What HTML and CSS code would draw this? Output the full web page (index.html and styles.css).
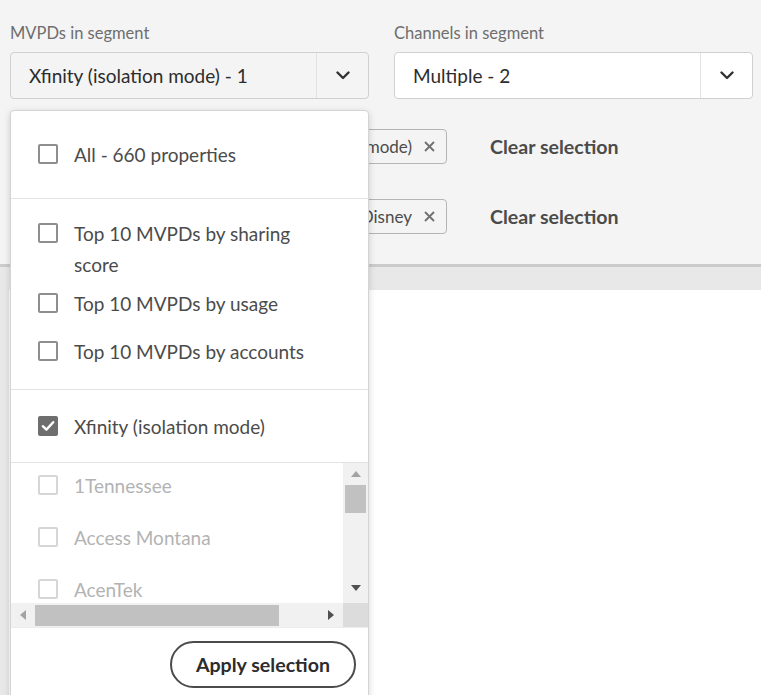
FILE: index.html
```html
<!DOCTYPE html>
<html lang="en">
<head>
<meta charset="utf-8">
<title>Segment filters</title>
<link rel="stylesheet" href="styles.css">
</head>
<body>
<div class="page">
  <header class="filters">
    <div class="fields">
      <div class="field">
        <div class="label">MVPDs in segment</div>
        <div class="select select-open">
          <span class="select-value">Xfinity (isolation mode) - 1</span>
          <span class="select-btn"><svg width="14" height="9" viewBox="0 0 14 9"><path d="M1.5 1.5 L7 7 L12.5 1.5" fill="none" stroke="#323232" stroke-width="2.4" stroke-linecap="round" stroke-linejoin="round"/></svg></span>
        </div>
      </div>
      <div class="field">
        <div class="label">Channels in segment</div>
        <div class="select">
          <span class="select-value">Multiple - 2</span>
          <span class="select-btn"><svg width="14" height="9" viewBox="0 0 14 9"><path d="M1.5 1.5 L7 7 L12.5 1.5" fill="none" stroke="#323232" stroke-width="2.4" stroke-linecap="round" stroke-linejoin="round"/></svg></span>
        </div>
      </div>
    </div>
    <div class="tag-row">
      <div class="tags">
        <span class="chip">Xfinity (isolation mode)<svg class="chip-x" width="11" height="11" viewBox="0 0 11 11"><path d="M1 1 L10 10 M10 1 L1 10" stroke="#707070" stroke-width="1.8"/></svg></span>
      </div>
      <span class="clear">Clear selection</span>
    </div>
    <div class="tag-row second">
      <div class="tags">
        <span class="chip">ESPN, Disney<svg class="chip-x" width="11" height="11" viewBox="0 0 11 11"><path d="M1 1 L10 10 M10 1 L1 10" stroke="#707070" stroke-width="1.8"/></svg></span>
      </div>
      <span class="clear">Clear selection</span>
    </div>
  </header>
  <div class="band"></div>
  <main class="content"></main>

  <div class="dropdown">
    <div class="section section-all">
      <label class="opt"><span class="box"></span><span class="opt-text">All - 660 properties</span></label>
    </div>
    <div class="section section-top">
      <label class="opt"><span class="box"></span><span class="opt-text">Top 10 MVPDs by sharing score</span></label>
      <label class="opt opt-usage"><span class="box"></span><span class="opt-text">Top 10 MVPDs by usage</span></label>
      <label class="opt opt-accounts"><span class="box"></span><span class="opt-text">Top 10 MVPDs by accounts</span></label>
    </div>
    <div class="section section-selected">
      <label class="opt"><span class="box checked"><svg width="14" height="12" viewBox="0 0 14 12"><path d="M1.8 6.2 L5.4 9.6 L12.2 2.2" fill="none" stroke="#fff" stroke-width="2.4" stroke-linecap="round" stroke-linejoin="round"/></svg></span><span class="opt-text">Xfinity (isolation mode)</span></label>
    </div>
    <div class="scroller">
      <div class="list">
        <label class="opt disabled"><span class="box"></span><span class="opt-text">1Tennessee</span></label>
        <label class="opt disabled"><span class="box"></span><span class="opt-text">Access Montana</span></label>
        <label class="opt disabled"><span class="box"></span><span class="opt-text">AcenTek</span></label>
      </div>
      <div class="vbar">
        <span class="arrow up dim"></span>
        <span class="vthumb"></span>
        <span class="vtrack"></span>
        <span class="arrow down"></span>
      </div>
      <div class="hbar">
        <span class="arrow left dim"></span>
        <span class="hthumb"></span>
        <span class="htrack"></span>
        <span class="arrow right"></span>
      </div>
      <div class="corner"></div>
    </div>
    <div class="actions">
      <button class="apply">Apply selection</button>
    </div>
  </div>
</div>
</body>
</html>
```

FILE: styles.css
```css
* { box-sizing: border-box; }

body {
  margin: 0;
  font-family: Lato, "Open Sans", sans-serif;
  background: #e8e8e8;
  color: #2c2c2c;
}

.page {
  position: relative;
  height: 695px;
  overflow: hidden;
}

.filters {
  background: #f4f4f4;
  padding: 23px 8px 30px 10px;
  border-bottom: 3px solid #cbcbcb;
}

.fields {
  display: flex;
  gap: 25px;
}

.field {
  width: 359px;
}

.label {
  font-size: 16.5px;
  line-height: 20px;
  color: #6e6e6e;
  margin-bottom: 9px;
}

.select {
  height: 47px;
  display: flex;
  align-items: stretch;
  border: 1px solid #d0d0d0;
  border-radius: 4px;
  background: #fff;
}

.select-open {
  background: #f4f4f4;
}

.select-value {
  flex: 1;
  display: flex;
  align-items: center;
  padding-left: 18px;
  font-size: 19px;
  color: #2c2c2c;
}

.select-btn {
  width: 52px;
  border-left: 1px solid #e2e2e2;
  display: flex;
  align-items: center;
  justify-content: center;
}

.tag-row {
  display: flex;
  align-items: center;
  margin-top: 30px;
  height: 35px;
}

.tag-row.second {
  margin-top: 35px;
}

.tags {
  width: 437px;
  display: flex;
  justify-content: flex-end;
  overflow: hidden;
  height: 35px;
}

.chip {
  height: 35px;
  display: flex;
  align-items: center;
  gap: 12px;
  padding: 0 11px 0 12px;
  border: 1px solid #b5b5b5;
  border-radius: 4px;
  font-size: 17px;
  color: #4b4b4b;
  white-space: nowrap;
}

.clear {
  margin-left: 43px;
  font-size: 19.6px;
  font-weight: 700;
  color: #4b4b4b;
}

.band {
  height: 23px;
  background: #e8e8e8;
}

.content {
  margin-left: 9px;
  height: 420px;
  background: #fff;
}

/* dropdown menu overlaying the page */
.dropdown {
  position: absolute;
  left: 10px;
  top: 110px;
  width: 359px;
  bottom: -10px;
  background: #fff;
  border: 1px solid #d4d4d4;
  border-radius: 4px 4px 0 0;
  box-shadow: 0 2px 7px rgba(0, 0, 0, 0.16);
}

.section {
  border-bottom: 1px solid #e3e3e3;
  padding-left: 27px;
}

.section-all {
  height: 88px;
  display: flex;
  align-items: center;
}

.section-top {
  padding-top: 19px;
  padding-bottom: 22px;
}

.section-selected {
  height: 73px;
  display: flex;
  align-items: center;
}

.opt {
  display: flex;
  align-items: flex-start;
  font-size: 19px;
  line-height: 31px;
  color: #4b4b4b;
}

.opt-text {
  max-width: 256px;
}

.opt-usage {
  margin-top: 8px;
}

.opt-accounts {
  margin-top: 17px;
}

.box {
  flex: none;
  width: 20px;
  height: 20px;
  margin: 5px 16px 0 0;
  border: 2px solid #8e8e8e;
  border-radius: 2px;
  display: flex;
  align-items: center;
  justify-content: center;
}

.box.checked {
  background: #6e6e6e;
  border-color: #6e6e6e;
}

.opt.disabled {
  color: #b3b3b3;
}

.opt.disabled .box {
  border-color: #d6d6d6;
}

/* list with its drawn scrollbars */
.scroller {
  display: grid;
  grid-template-columns: 1fr 25px;
  grid-template-rows: 140px 24px;
  border-bottom: 1px solid #ececec;
}

.list {
  overflow: hidden;
  padding-left: 27px;
}

.list .opt {
  padding: 7px 0 14px;
}

.vbar {
  display: flex;
  flex-direction: column;
  align-items: center;
  background: #f1f1f1;
}

.vthumb {
  width: 21px;
  height: 28px;
  background: #c1c1c1;
}

.vtrack {
  flex: 1;
}

.hbar {
  display: flex;
  align-items: center;
  background: #f1f1f1;
}

.hthumb {
  width: 244px;
  height: 21px;
  background: #c1c1c1;
}

.htrack {
  flex: 1;
}

.corner {
  background: #dcdcdc;
}

.arrow {
  flex: none;
  width: 0;
  height: 0;
  border-style: solid;
}

.arrow.up {
  margin: 8px 0 8px;
  border-width: 0 5px 6px 5px;
  border-color: transparent transparent #505050 transparent;
}

.arrow.down {
  margin: 9px 0 12px;
  border-width: 6px 5px 0 5px;
  border-color: #505050 transparent transparent transparent;
}

.arrow.left {
  margin: 0 9px 0 9px;
  border-width: 5px 6px 5px 0;
  border-color: transparent #505050 transparent transparent;
}

.arrow.right {
  margin: 0 9px 0 8px;
  border-width: 5px 0 5px 6px;
  border-color: transparent transparent transparent #505050;
}

.arrow.up.dim {
  border-bottom-color: #a3a3a3;
}

.arrow.left.dim {
  border-right-color: #a3a3a3;
}

.actions {
  display: flex;
  justify-content: flex-end;
  padding: 13px 12px 0 0;
}

.apply {
  height: 47px;
  padding: 0 24px;
  border: 2px solid #4b4b4b;
  border-radius: 24px;
  background: #fff;
  font-family: Lato, "Open Sans", sans-serif;
  font-size: 19.6px;
  font-weight: 700;
  color: #2c2c2c;
}
```
